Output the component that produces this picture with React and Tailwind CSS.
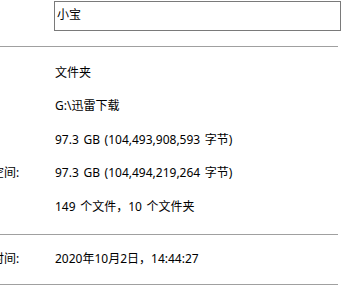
const font = { fontFamily: '"Noto Sans", "Noto Sans CJK SC", sans-serif' };

function Row({ label, value }) {
    return (
        <div className="flex items-center h-[33.5px] text-[12px] text-black [word-spacing:1.5px]">
            <div className="w-[87px] ml-[-32px] shrink-0 whitespace-nowrap">{label}</div>
            <div className="whitespace-nowrap">{value}</div>
        </div>
    );
}

export default function App() {
    return (
        <div className="w-[347px] h-[296px] bg-white overflow-hidden" style={font}>
            <div className="pt-[1px]">
                <div className="ml-[54px] w-[287px] h-[30px] border border-[#7a7a7a] px-[2px] pt-[5px] text-[12px] leading-[16px] text-black">
                    小宝
                </div>
            </div>
            <div className="mt-[15px] w-[338px] h-px bg-[#a0a0a0]" />
            <div className="pt-[9px]">
                <Row label="" value="文件夹" />
                <Row label="" value="G:\迅雷下载" />
                <Row label="" value="97.3 GB (104,493,908,593 字节)" />
                <Row label="占用空间:" value="97.3 GB (104,494,219,264 字节)" />
                <Row label="" value="149 个文件，10 个文件夹" />
            </div>
            <div className="mt-[10px] w-[338px] h-px bg-[#a0a0a0]" />
            <div className="pt-[8px]">
                <Row label="创建时间:" value="2020年10月2日，14:44:27" />
            </div>
            <div className="mt-[8px] w-[338px] h-px bg-[#a0a0a0]" />
        </div>
    );
}
